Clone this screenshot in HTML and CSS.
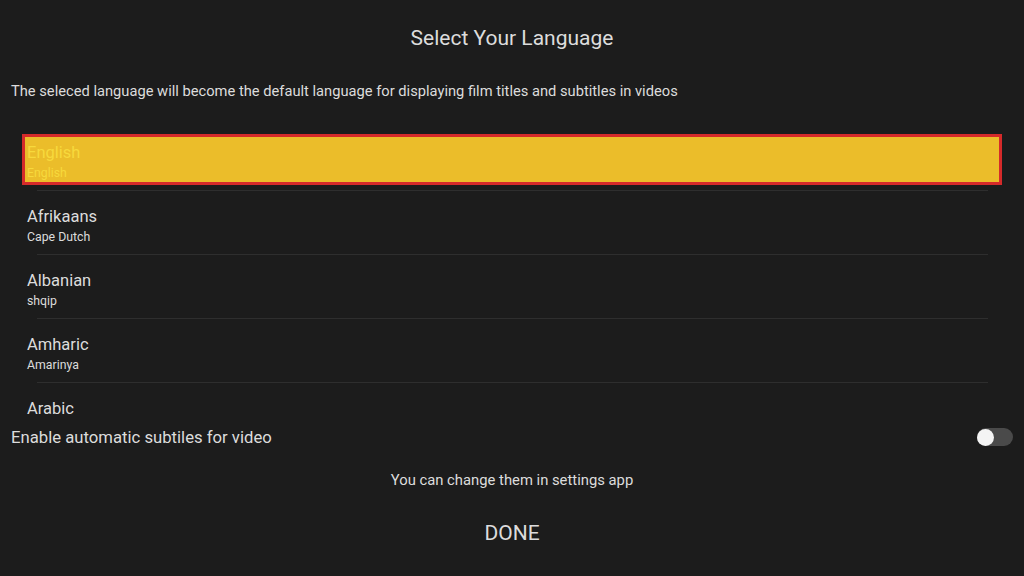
FILE: index.html
```html
<!DOCTYPE html>
<html lang="en">
<head>
    <meta charset="UTF-8">
    <meta name="viewport" content="width=device-width, initial-scale=1.0">
    <title>Select Your Language</title>
    <link rel="stylesheet" href="styles.css">
</head>
<body>
    <h1 class="title">Select Your Language</h1>
    <p class="intro">The seleced language will become the default language for displaying film titles and subtitles in videos</p>

    <div class="lang-list">
        <div class="lang-item">
            <div class="lang-box selected">
                <div class="lang-name">English</div>
                <div class="lang-native">English</div>
            </div>
        </div>
        <div class="divider"></div>
        <div class="lang-item">
            <div class="lang-box">
                <div class="lang-name">Afrikaans</div>
                <div class="lang-native">Cape Dutch</div>
            </div>
        </div>
        <div class="divider"></div>
        <div class="lang-item">
            <div class="lang-box">
                <div class="lang-name">Albanian</div>
                <div class="lang-native">shqip</div>
            </div>
        </div>
        <div class="divider"></div>
        <div class="lang-item">
            <div class="lang-box">
                <div class="lang-name">Amharic</div>
                <div class="lang-native">Amarinya</div>
            </div>
        </div>
        <div class="divider"></div>
        <div class="lang-item">
            <div class="lang-box">
                <div class="lang-name">Arabic</div>
            </div>
        </div>
    </div>

    <div class="subs-row">
        <span>Enable automatic subtiles for video</span>
        <div class="toggle"><div class="knob"></div></div>
    </div>

    <p class="hint">You can change them in settings app</p>
    <div class="done">DONE</div>
</body>
</html>
```

FILE: styles.css
```css
body {
    margin: 0;
    background-color: #1c1c1c;
    color: #dcdcdc;
    font-family: Roboto, "Liberation Sans", sans-serif;
}

.title {
    margin: 0;
    padding-top: 26px;
    font-size: 21px;
    font-weight: 400;
    line-height: 24px;
    text-align: center;
}

.intro {
    margin: 32px 0 0 11px;
    font-size: 14.7px;
    line-height: 18px;
}

.lang-list {
    margin: 27px 22px 0 22px;
    height: 293px;
    overflow: hidden;
}

.lang-item {
    height: 63px;
    padding-top: 7px;
    box-sizing: border-box;
}

.lang-box {
    border: 3px solid transparent;
    padding: 6px 2px 2px 2px;
}

.lang-box.selected {
    border-color: #d52a2a;
    background-color: #ebbd2a;
    color: #f7d93c;
}

.lang-name {
    font-size: 16.5px;
    line-height: 20px;
}

.lang-native {
    margin-top: 3px;
    font-size: 12.3px;
    line-height: 14px;
}

.divider {
    height: 1px;
    margin: 0 14px 0 15px;
    background-color: #2e2e2e;
}

.subs-row {
    display: flex;
    align-items: center;
    justify-content: space-between;
    height: 34px;
    padding: 0 11px;
    font-size: 16.7px;
}

.toggle {
    width: 36px;
    height: 18px;
    border-radius: 9px;
    background-color: #4a4a4a;
    display: flex;
    align-items: center;
}

.knob {
    width: 17px;
    height: 17px;
    border-radius: 50%;
    background-color: #f4f4f4;
}

.hint {
    margin: 17px 0 0 0;
    font-size: 14.8px;
    line-height: 18px;
    text-align: center;
}

.done {
    margin-top: 32px;
    font-size: 21px;
    line-height: 24px;
    text-align: center;
}
```
